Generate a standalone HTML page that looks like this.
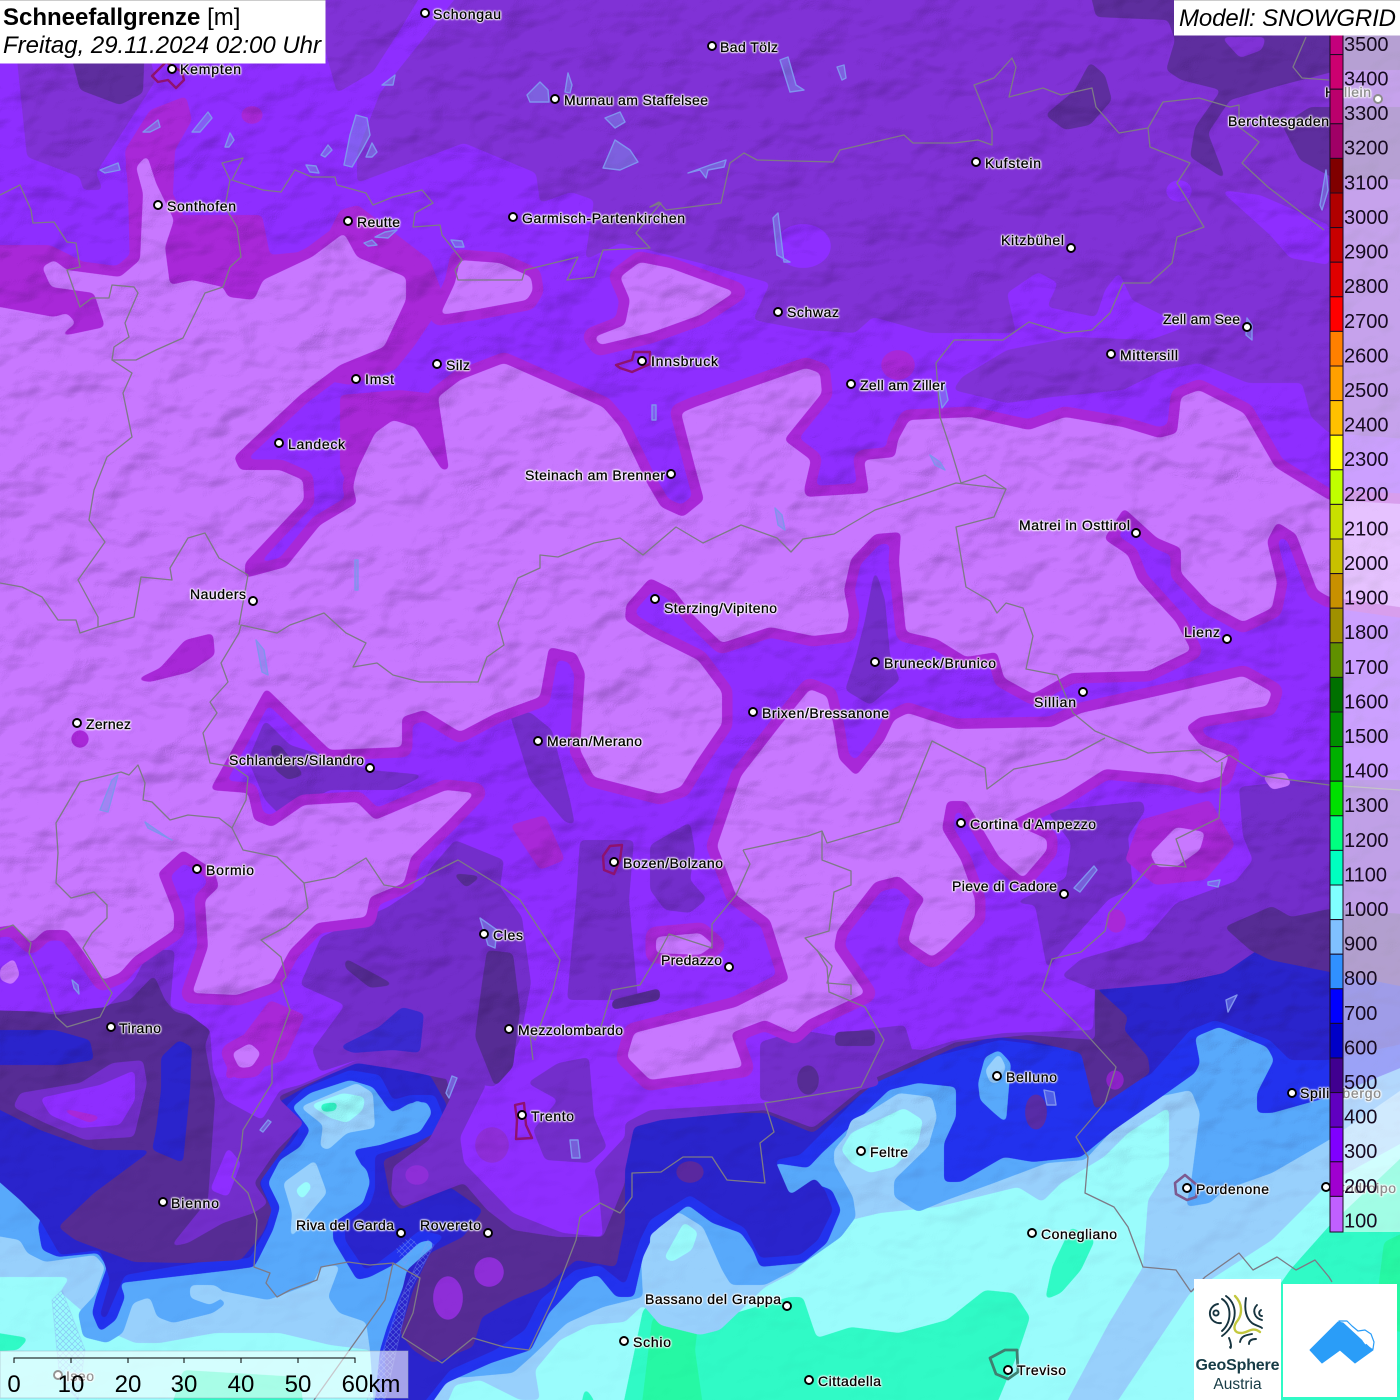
<!DOCTYPE html>
<html><head><meta charset="utf-8"><title>Schneefallgrenze</title>
<style>
html,body{margin:0;padding:0;background:#fff}
#w{position:relative;width:1400px;height:1400px;overflow:hidden;font-family:"Liberation Sans",sans-serif}
svg{position:absolute;left:0;top:0}
.l{filter:drop-shadow(0 0 .7px #fff) drop-shadow(0 0 .7px #fff) drop-shadow(0 0 .7px #fff)}
.l text{font:14px "Liberation Sans",sans-serif;fill:#000;stroke:#000;stroke-width:.3px}
.d circle{fill:#fff;stroke:#000;stroke-width:1.9}
.b path{fill:none;stroke:#7d7a86;stroke-width:1.3;stroke-linejoin:round}
.lk path{fill:#7b8ee8;fill-opacity:.5;stroke:#8093ee;stroke-width:1.4;stroke-linejoin:round}
.lg text{font:20px "Liberation Sans",sans-serif;fill:#160a20}
.sc text{font:24px "Liberation Sans",sans-serif;fill:#000;text-anchor:middle}
</style></head><body><div id="w">
<svg width="1400" height="1400" viewBox="0 0 1400 1400" xmlns="http://www.w3.org/2000/svg">
<defs>
<filter id="s" filterUnits="userSpaceOnUse" x="-40" y="-40" width="1480" height="1480" color-interpolation-filters="sRGB"><feGaussianBlur stdDeviation="2.6"/><feComponentTransfer><feFuncA type="linear" slope="10" intercept="-4.5"/></feComponentTransfer></filter>
<filter id="hs" filterUnits="userSpaceOnUse" x="0" y="0" width="1400" height="1400" color-interpolation-filters="sRGB"><feTurbulence type="fractalNoise" baseFrequency="0.018 0.026" numOctaves="3" seed="7"/><feColorMatrix type="matrix" values="0 0 0 0 0 0 0 0 0 0 0 0 0 0 0 1 0 0 0 0"/><feDiffuseLighting surfaceScale="9" diffuseConstant="1.27" lighting-color="#fff"><feDistantLight azimuth="225" elevation="52"/></feDiffuseLighting><feColorMatrix type="matrix" values="0 0 0 0 .12 0 0 0 0 .03 0 0 0 0 .25 -.34 0 0 0 .34"/></filter>
<linearGradient id="hg" x1="0" y1="0" x2="0" y2="1"><stop offset="0" stop-color="#fff"/><stop offset=".72" stop-color="#fff"/><stop offset=".86" stop-color="#444"/><stop offset="1" stop-color="#111"/></linearGradient>
<mask id="hm" maskUnits="userSpaceOnUse" x="0" y="0" width="1400" height="1400"><rect width="1400" height="1400" fill="url(#hg)"/></mask>
<pattern id="hatch" width="6" height="6" patternUnits="userSpaceOnUse"><path d="M0 0L6 6M6 0L0 6" stroke="#7d9cf0" stroke-width=".7"/></pattern>
<path id="L1" d="M-20,305 L0,307 54,317 67,313 76,323 58,337 105,327 94,293 51,287 42,267 54,260 67,270 120,277 140,260 143,193 136,167 147,155 156,183 174,220 165,247 170,285 192,280 223,287 228,297 254,300 263,280 312,257 344,233 357,257 406,277 406,300 384,347 340,365 300,395 234,457 240,470 280,470 303,480 304,500 245,563 245,578 286,567 320,525 357,503 353,487 357,470 375,433 393,420 415,427 442,470 449,470 438,397 460,380 504,363 603,407 620,427 647,483 661,507 683,517 704,500 695,467 681,413 695,407 806,368 820,373 822,393 784,440 811,460 804,490 806,497 869,493 864,460 895,457 898,440 909,420 971,417 1029,430 1065,417 1123,427 1159,438 1177,433 1181,397 1199,390 1244,413 1275,467 1329,500 1420,505 1420,610 1329,597 1317,590 1296,534 1277,522 1267,541 1277,583 1272,608 1243,622 1210,604 1181,573 1181,548 1157,538 1124,508 1104,539 1128,555 1138,580 1176,622 1191,650 1148,671 1071,673 1033,694 1004,678 997,652 966,657 937,639 906,632 899,562 901,532 875,534 851,559 844,590 849,615 846,632 813,636 770,627 722,643 693,615 674,590 650,578 626,605 625,620 650,636 698,660 722,692 722,724 698,759 681,787 660,794 594,777 580,750 585,673 576,653 549,647 540,697 496,713 460,732 424,710 402,717 402,747 330,750 266,688 210,790 248,793 254,820 272,827 304,805 357,802 375,820 446,790 475,793 446,823 411,857 404,883 370,897 366,917 317,923 290,950 272,983 237,995 192,993 208,947 205,900 219,887 214,870 183,850 158,873 174,913 174,930 134,957 120,973 103,980 80,947 67,930 45,930 31,943 13,925 -20,930Z"/>
<path id="L2" d="M779,727 810,689 827,696 834,727 839,759 856,776 884,741 894,720 908,713 956,729 1052,727 1081,713 1157,696 1243,676 1272,692 1267,706 1200,717 1186,727 1200,745 1229,755 1222,776 1200,783 1172,775 1105,769 1061,797 1009,822 1047,839 1047,850 1023,878 999,857 966,801 947,801 942,829 961,860 975,899 975,917 944,948 932,957 908,941 916,913 925,899 899,876 875,882 837,931 834,948 865,993 808,1020 794,1033 765,1020 731,1033 743,1067 650,1080 627,1057 634,1033 736,1007 789,980 770,920 736,895 717,846 741,776Z"/>
<path id="L3" d="M460,260 500,263 531,277 533,290 527,300 473,310 440,315 455,283Z"/>
<path id="L4" d="M620,277 640,262 670,268 735,292 700,315 650,333 600,345 594,337 625,325 630,300Z"/>
<path id="L5" d="M1150,854 1176,827 1205,832 1200,850 1176,867 1157,867Z"/>
<path id="L6" d="M656,937 700,933 714,945 700,955 656,953Z"/>
<path id="L7" d="M232,1053 250,1043 261,1053 252,1067 239,1068Z"/>
</defs>

<!-- base -->
<rect width="1400" height="1400" fill="#9afcfc"/>
<g fill="#30fac6" filter="url(#s)">
<path d="M620,1420 643,1310 660,1295 700,1300 712,1320 789,1297 803,1297 813,1327 817,1338 851,1327 899,1333 947,1320 985,1290 1014,1293 1030,1317 1018,1353 990,1420Z"/>
<path d="M1185,1420 1290,1270 1330,1225 1420,1140 1420,1420Z"/>
<path d="M1071,1227 1095,1240 1081,1270 1061,1293 1045,1300 1052,1267Z"/>
<path d="M-20,1330 29,1338 18,1350 -20,1352Z"/>
<path d="M167,1420 183,1370 300,1377 305,1420Z"/>
<path d="M578,1420 585,1387 594,1400 596,1420Z"/>
</g>
<g fill="#26f8a4" filter="url(#s)">
<path d="M640,1420 652,1320 665,1308 700,1308 695,1350 705,1420Z"/>
<path d="M1384,1242 1420,1225 1420,1335 1390,1330 1378,1290Z"/>
</g>

<!-- 900 -->
<g fill="#98d0fc" filter="url(#s)"><path d="M-20,1277 70,1277 60,1292 75,1305 105,1330 135,1343 160,1343 215,1333 280,1333 330,1345 370,1350 395,1420 440,1420 455,1385 480,1380 520,1400 540,1400 535,1370 560,1340 590,1325 625,1322 643,1305 660,1325 700,1335 720,1330 765,1287 793,1273 851,1220 880,1213 937,1207 1018,1187 1042,1202 1061,1183 1104,1157 1128,1133 1169,1107 1169,1167 1148,1200 1143,1267 1109,1323 1057,1420 1105,1420 1190,1293 1272,1240 1329,1183 1420,1133 1420,-20 -20,-20Z"/></g>
<!-- 800 -->
<g fill="#58a9fb" filter="url(#s)"><path d="M-20,1233 20,1240 27,1253 45,1262 95,1255 105,1267 95,1295 78,1313 83,1337 107,1343 123,1333 133,1303 150,1297 157,1317 173,1323 213,1313 227,1303 195,1285 232,1293 268,1300 313,1283 321,1267 340,1265 328,1297 339,1313 366,1322 370,1350 375,1420 420,1420 447,1378 469,1377 513,1373 531,1357 567,1323 603,1307 643,1297 640,1240 650,1227 679,1212 703,1227 722,1270 731,1285 765,1285 794,1270 841,1237 856,1217 853,1197 834,1163 834,1150 861,1117 899,1093 932,1097 937,1117 928,1147 894,1180 894,1197 918,1212 947,1200 994,1183 1047,1163 1085,1160 1119,1123 1157,1097 1191,1090 1200,1113 1191,1183 1186,1207 1210,1203 1224,1190 1272,1173 1329,1140 1420,1077 1420,-20 -20,-20Z"/></g>
<!-- 700 -->
<g fill="#2232ee" filter="url(#s)"><path d="M-20,1180 15,1183 45,1203 38,1227 42,1250 58,1257 98,1253 107,1267 96,1297 92,1313 100,1332 116,1320 125,1297 120,1283 232,1270 254,1267 258,1260 273,1230 280,1207 268,1183 280,1160 300,1147 310,1130 300,1117 292,1107 310,1093 350,1080 373,1087 387,1107 393,1113 410,1103 427,1102 432,1113 420,1132 380,1145 353,1148 353,1157 367,1170 370,1183 363,1203 333,1223 333,1240 357,1280 370,1277 397,1263 420,1242 432,1240 433,1247 407,1277 387,1327 380,1350 373,1420 420,1420 446,1383 491,1363 531,1350 549,1313 580,1280 598,1275 616,1297 634,1297 643,1257 656,1230 688,1205 712,1223 741,1233 753,1250 760,1267 803,1263 827,1243 841,1210 832,1190 813,1183 789,1203 774,1163 808,1168 822,1153 861,1117 889,1090 918,1083 956,1087 956,1117 944,1143 944,1182 961,1182 1004,1157 1033,1162 1081,1157 1114,1130 1157,1100 1195,1073 1200,1063 1195,1037 1219,1027 1267,1047 1274,1060 1257,1093 1257,1113 1272,1113 1329,1097 1420,1060 1420,-20 -20,-20Z"/></g>
<!-- islands in blue -->
<g fill="#58a9fb" filter="url(#s)"><path d="M978,1083 985,1057 999,1050 1011,1063 1006,1123 994,1113 980,1100Z"/></g>
<g fill="#98d0fc" filter="url(#s)"><path d="M985,1070 999,1053 1006,1067 999,1083 990,1083Z"/></g>
<!-- 600 -->
<g fill="#2a24cc" filter="url(#s)"><path d="M-20,1165 20,1200 40,1220 60,1255 100,1250 110,1280 100,1315 105,1320 118,1290 125,1275 200,1262 250,1258 268,1225 270,1205 260,1183 272,1160 290,1145 300,1130 285,1107 305,1088 350,1070 380,1075 393,1100 410,1095 435,1095 443,1115 430,1140 375,1155 375,1190 370,1205 345,1225 345,1240 365,1270 375,1265 395,1250 420,1230 445,1236 407,1270 395,1320 385,1345 385,1420 410,1420 450,1370 495,1350 525,1330 540,1300 575,1270 600,1265 625,1285 640,1240 650,1220 690,1195 720,1215 745,1228 760,1258 800,1255 818,1240 833,1210 825,1190 815,1178 790,1195 775,1160 800,1155 860,1095 880,1070 1000,1040 1080,1050 1100,1095 1150,1075 1190,1030 1215,1020 1270,1040 1290,1060 1329,1060 1420,1040 1420,-20 -20,-20Z"/></g>
<!-- 500 -->
<g fill="#562c94" filter="url(#s)"><path d="M-20,1100 40,1130 95,1150 152,1150 94,1193 58,1227 75,1240 134,1262 188,1263 241,1260 263,1233 272,1210 259,1183 290,1140 295,1130 277,1103 300,1090 357,1060 430,1075 447,1105 440,1130 395,1155 383,1160 390,1197 400,1210 450,1187 483,1210 463,1237 430,1253 413,1290 400,1333 413,1350 433,1363 473,1347 482,1317 513,1300 545,1287 576,1260 616,1267 625,1223 625,1133 661,1113 765,1113 813,1133 875,1083 956,1047 994,1037 1028,1040 1081,1053 1095,1110 1150,1073 1148,1057 1124,1030 1128,1017 1095,987 1176,983 1224,973 1243,960 1272,940 1340,930 1420,930 1420,-20 -20,-20Z"/></g>
<!-- 600 patches in 500 -->
<g fill="#2a24cc" filter="url(#s)">
<path d="M-20,1030 55,1030 90,1040 94,1060 60,1065 -20,1065Z"/>
<path d="M161,1057 179,1040 192,1047 190,1090 183,1163 152,1150 156,1130 161,1090Z"/>
<path d="M1150,1045 1190,1005 1240,985 1272,950 1300,985 1329,993 1329,1060 1290,1060 1270,1040 1215,1020 1190,1030 1150,1075Z"/>
</g>
<!-- 400 -->
<g fill="#732ecb" filter="url(#s)"><path d="M-20,1005 60,1015 130,1000 154,975 165,1000 175,1012 214,1020 205,1045 215,1100 208,1200 170,1247 188,1243 223,1223 254,1213 268,1203 254,1183 277,1150 304,1123 277,1097 357,1063 446,1077 451,1097 429,1140 393,1167 391,1193 402,1207 464,1183 487,1210 513,1230 558,1237 603,1237 625,1183 625,1170 634,1127 661,1120 765,1110 813,1128 875,1078 956,1042 1028,1035 1095,1040 1095,985 1176,980 1224,970 1243,958 1272,938 1340,928 1420,928 1420,-20 -20,-20Z"/></g>
<g fill="#732ecb" filter="url(#s)"><path d="M20,1093 80,1083 112,1063 143,1060 147,1083 134,1137 85,1140 45,1123 13,1107Z"/></g>
<!-- 300 -->
<g fill="#8e2eff" filter="url(#s)"><path d="M-20,1010 58,1012 107,1007 134,980 150,950 175,950 170,1007 187,1013 210,1030 213,1070 225,1100 262,1120 280,1090 300,1085 357,1060 450,1078 487,1083 460,1137 464,1163 513,1213 563,1233 603,1237 598,1183 594,1170 625,1137 625,1123 650,1110 765,1103 803,1090 860,1077 884,1047 923,1050 956,1040 1004,1033 1093,1030 1095,990 1087,960 1200,930 1236,881 1253,860 1243,836 1239,787 1300,780 1420,780 1420,-20 -20,-20Z"/>
<path d="M40,1098 100,1085 135,1070 135,1100 120,1125 80,1128 50,1115Z"/><path d="M210,1190 228,1147 241,1163 228,1197Z"/></g>
<!-- central / eastern 400 patches -->
<g fill="#732ecb" filter="url(#s)">
<path d="M321,937 388,907 424,883 429,870 455,840 504,860 500,887 522,917 531,983 520,1040 495,1087 450,1080 357,1060 320,1072 312,1050 345,1005 300,985Z"/>
<path d="M527,1083 558,1063 589,1057 594,1117 607,1147 589,1163 545,1160 533,1130 558,1100Z"/>
<path d="M580,840 634,840 629,900 638,1000 567,1000 576,900Z"/>
<path d="M650,845 690,822 695,850 690,880 707,899 690,913 665,910 650,890Z"/>
<path d="M1047,811 1143,801 1145,811 1128,836 1133,889 1109,899 1071,941 1047,969 1035,905 1014,903 1066,878 1071,843Z"/>
<path d="M1239,787 1243,836 1253,860 1236,881 1176,903 1143,941 1081,959 1061,976 1095,990 1176,983 1224,973 1243,960 1272,940 1340,928 1420,928 1420,790Z"/>
<path d="M860,1030 905,1025 915,1060 870,1075 840,1080 820,1050Z"/>
<path d="M760,1042 800,1030 860,1040 880,1085 800,1105 760,1100Z"/>
<path d="M510,715 530,712 552,730 570,800 575,825 565,822 530,780Z"/>
<path d="M265,720 290,745 370,770 425,775 395,790 330,790 280,815 265,800 248,760Z"/>
<path d="M875,568 885,600 890,655 900,680 870,705 845,690 855,660 865,620Z"/>
</g>
<!-- 500 patches -->
<g fill="#562c94" filter="url(#s)">
<path d="M487,950 513,953 520,1010 513,1067 495,1087 475,1037 482,983Z"/>
<path d="M345,958 395,985 370,988 345,968Z"/>
<path d="M452,873 482,876 466,888Z"/>
<path d="M612,1000 660,988 660,1000 612,1010Z"/>
<path d="M835,1032 875,1030 875,1046 835,1046Z"/>
<ellipse cx="808" cy="1080" rx="11" ry="15"/>
<path d="M270,745 280,745 304,775 288,780 275,770Z"/>
<path d="M1224,927 1272,906 1291,917 1329,909 1420,915 1420,990 1270,960 1250,950Z"/>
</g>
<!-- blue patch central-west -->
<g fill="#3a2ad0" filter="url(#s)"><path d="M339,1047 379,1027 402,1007 424,1013 420,1053 393,1050 353,1053Z"/></g>
<!-- north 400 -->
<g fill="#8032d6" filter="url(#s)">
<path d="M470,-20 380,93 357,153 357,183 464,143 536,173 540,203 571,192 594,200 585,260 620,243 700,263 770,283 753,320 806,330 855,333 873,317 930,333 1016,333 1007,293 1038,272 1058,283 1047,307 1096,317 1105,290 1119,272 1132,300 1186,327 1150,340 1074,337 1007,350 962,377 953,390 1007,403 1052,397 1123,390 1163,370 1199,363 1248,383 1302,383 1311,417 1329,433 1420,440 1420,-20Z"/>
<path d="M325,-20 325,50 337,93 373,72 400,30 430,-20Z"/>
<path d="M15,40 27,157 80,177 83,190 103,190 96,173 156,80 145,40Z"/>
</g>
<g fill="#8e2eff" filter="url(#s)">
<ellipse cx="803" cy="246" rx="28" ry="22"/>
<path d="M1220,190 1260,195 1329,225 1329,265 1290,258 1270,235Z"/>
<ellipse cx="1179" cy="191" rx="13" ry="11"/>
</g>
<g fill="#5e2e9e" filter="url(#s)">
<path d="M1087,-20 1096,17 1168,20 1175,40 1166,70 1181,80 1221,90 1195,127 1190,157 1226,180 1208,133 1230,100 1282,85 1340,70 1420,70 1420,-20Z"/>
<path d="M1045,115 1075,90 1090,62 1105,75 1112,100 1090,125 1065,130Z"/>
<path d="M1282,125 1310,107 1420,107 1420,180 1333,178 1300,160Z"/>
<path d="M67,40 80,90 120,105 143,93 145,40Z"/>
</g>
<g fill="#8032d6" filter="url(#s)"><path d="M1221,37 1266,37 1262,50 1240,58Z"/></g>
<!-- 200 -->
<g fill="#a828d8" filter="url(#s)" stroke="#a828d8" stroke-width="21" stroke-linejoin="round">
<use href="#L1"/><use href="#L2"/><use href="#L3"/><use href="#L4"/><use href="#L5"/><use href="#L6"/><use href="#L7"/>
</g>
<g fill="#a828d8" filter="url(#s)">
<path d="M-20,245 50,245 100,270 130,270 128,190 125,150 150,110 186,96 192,120 175,150 172,215 262,215 270,255 320,250 340,210 358,205 430,260 445,300 415,345 395,370 350,385 100,340 -20,340Z"/>
<path d="M340,395 400,390 445,395 452,470 435,470 395,440 370,450 357,500 340,470Z"/>
<path d="M230,1053 270,1000 305,1015 285,1060 225,1080Z"/>
<path d="M58,1107 103,1117 90,1123 70,1115Z"/>
<path d="M1140,820 1210,800 1235,845 1205,880 1155,885 1125,860Z"/>
<path d="M510,825 545,815 565,860 540,870Z"/>
<ellipse cx="252" cy="115" rx="11" ry="9"/>
<ellipse cx="898" cy="365" rx="17" ry="15"/>
<ellipse cx="1116" cy="921" rx="10" ry="12"/>
<ellipse cx="1115" cy="1080" rx="9" ry="10" fill="#8c22c8"/>
</g>
<g fill="#8e2ed8" filter="url(#s)">
<ellipse cx="448" cy="1298" rx="15" ry="22"/><ellipse cx="489" cy="1272" rx="15" ry="15"/><ellipse cx="417" cy="1175" rx="12" ry="10"/>
<ellipse cx="492" cy="1145" rx="17" ry="18"/>
</g>
<!-- 100 -->
<g fill="#c878ff" filter="url(#s)">
<use href="#L1"/><use href="#L2"/><use href="#L3"/><use href="#L4"/><use href="#L5"/><use href="#L6"/><use href="#L7"/>
<path d="M0,968 14,958 20,975 12,985 0,980Z"/>
<path d="M1262,776 1285,772 1292,785 1272,790Z"/>
</g>
<!-- spots in light -->
<g fill="#a828d8" filter="url(#s)"><path d="M135,680 160,668 185,640 213,633 215,655 190,672 150,682Z"/><circle cx="80" cy="739" r="9"/></g>
<!-- Riva & other high islands -->
<g fill="#58a9fb" filter="url(#s)"><path d="M293,1107 353,1082 367,1085 383,1100 387,1113 407,1107 417,1100 432,1108 420,1130 380,1145 353,1150 370,1180 363,1203 333,1223 332,1240 292,1250 283,1210 286,1170 310,1150 312,1130Z"/></g>
<g fill="#98d0fc" filter="url(#s)">
<path d="M300,1107 357,1083 373,1093 375,1128 347,1133 328,1150 320,1147 323,1125Z"/>
<path d="M283,1183 315,1160 327,1193 310,1213 290,1240 292,1213Z"/>
<path d="M650,1235 680,1212 705,1240 722,1285 700,1310 650,1300Z"/>
<path d="M841,1150 851,1120 900,1098 930,1105 930,1145 890,1180 860,1200 850,1175Z"/>
<path d="M190,1285 215,1285 228,1295 210,1305 190,1298Z"/>
</g>
<g fill="#9afcfc" filter="url(#s)">
<path d="M310,1105 343,1093 365,1097 363,1110 347,1123 330,1118Z"/>
<path d="M295,1190 307,1180 312,1187 302,1200Z"/>
<path d="M664,1258 684,1222 698,1232 692,1250 672,1262Z"/>
<path d="M841,1150 851,1133 904,1108 923,1120 918,1143 894,1167 870,1173 851,1163Z"/>
</g>
<g fill="#30fac6" filter="url(#s)"><path d="M320,1104 338,1102 336,1111 322,1112Z"/></g>
<g fill="#6a2a90" opacity=".75" filter="url(#s)"><ellipse cx="690" cy="1172" rx="14" ry="11"/><ellipse cx="1036" cy="1112" rx="11" ry="18"/></g>

<!-- hillshade -->
<g mask="url(#hm)"><rect width="1400" height="1400" filter="url(#hs)"/></g>

<!-- lakes -->
<g class="lk">
<path d="M344,165 350,135 356,115 367,118 370,135 362,150 352,167Z"/>
<path d="M382,85 395,75 393,85Z"/><path d="M143,132 158,120 160,127 150,132Z"/><path d="M192,132 208,112 212,118 200,132Z"/>
<path d="M100,170 118,163 120,170 105,173Z"/><path d="M225,147 230,133 234,140 229,147Z"/><path d="M321,155 328,145 332,150 325,157Z"/>
<path d="M366,157 372,143 377,152 372,157Z"/><path d="M306,165 316,166 319,173 310,172Z"/><path d="M375,237 385,232 397,230 388,238Z"/>
<path d="M364,243 372,240 377,245 368,246Z"/><path d="M451,240 462,241 464,247 455,247Z"/>
<path d="M527,95 540,82 548,90 549,102 530,102Z"/><path d="M565,92 568,73 572,85 570,93Z"/>
<path d="M605,118 620,112 625,122 615,128Z"/><path d="M603,168 615,140 630,150 638,162 620,170Z"/>
<path d="M780,60 788,57 796,85 804,90 790,92Z"/><path d="M837,67 844,65 846,78 842,80Z"/>
<path d="M688,173 710,165 726,160 724,167 708,170 706,178 700,170Z"/><path d="M773,218 778,213 784,262 790,262 777,255Z"/>
<path d="M1226,1000 1237,995 1228,1012Z"/><path d="M1074,888 1094,866 1097,870 1080,892Z"/>
<path d="M1208,882 1220,880 1218,887 1208,885Z"/><path d="M480,918 497,930 495,948 488,945Z"/>
<path d="M446,1093 452,1076 457,1078 449,1098Z"/><path d="M570,1140 578,1140 580,1158 572,1158Z"/>
<path d="M260,1130 268,1120 271,1122 263,1132Z"/><path d="M72,980 78,985 79,994 74,988Z"/>
<path d="M256,640 264,650 268,675 262,672Z"/><path d="M100,810 112,780 118,775 108,812Z"/>
<path d="M145,822 168,838 172,840 148,828Z"/><path d="M1044,1090 1054,1092 1056,1105 1047,1105Z"/>
<path d="M355,560 358,560 358,590 355,590Z"/><path d="M930,455 940,462 945,470 935,465Z"/>
<path d="M775,508 782,515 785,530 778,525Z"/><path d="M652,405 656,405 656,420 652,420Z"/>
<path d="M1247,318 1252,325 1252,340 1246,335Z"/><path d="M938,385 945,385 948,400 942,408Z"/>
<path d="M1320,205 1326,170 1328,190 1322,210Z"/>
</g>
<g opacity=".55">
<path d="M52,1300 62,1290 85,1350 78,1400 60,1380Z" fill="url(#hatch)" stroke="#8ea0f0" stroke-width="1" stroke-opacity=".5"/>
<path d="M367,1400 400,1300 428,1240 434,1245 410,1290 385,1400Z" fill="url(#hatch)" stroke="#8ea0f0" stroke-width="1" stroke-opacity=".5"/>
<path d="M395,1250 408,1237 418,1243 405,1265Z" fill="url(#hatch)"/>
</g>

<!-- borders -->
<g class="b">
<path d="M0,195 20,185 31,210 33,223 54,222 67,242 76,243 80,267 67,270 80,307 92,298 109,298 112,285 134,287 138,293 125,323 129,337 114,347 112,360 136,360 156,350 183,338 205,293 223,287 230,267 241,257 237,227 225,207 230,180 222,163 243,158 232,180 263,190 281,192 295,170 312,177 335,177 337,185 366,193 373,205 393,197 422,190 433,203 415,213 413,227 440,225 442,235 462,260 455,270 458,280 522,280 525,270 578,257 567,280 594,277 603,250 650,248 636,233 661,203 650,207 659,202 666,210 721,203 730,163 744,153 757,160 833,162 840,150 904,135 913,143 954,143 978,140 992,145 992,130 974,85 994,78 1012,58 1016,67 1009,97 1043,88 1061,95 1092,88 1096,107 1119,133 1148,128 1163,102 1199,98 1230,107 1239,105 1239,127 1259,142 1242,163 1268,187 1324,230"/>
<path d="M1306,37 1293,67 1302,78 1329,80"/>
<path d="M1148,128 1150,147 1190,163 1177,183 1204,227 1177,237 1172,263 1150,283 1123,283 1110,313 1092,330 1065,333 1029,322 1003,340 954,340 936,363 940,417 951,450 961,483 985,475 1006,489 994,517 956,527 966,587 990,601 997,613 1006,603 1023,608 1033,636 1026,669 1057,675 1073,713 1095,731 1148,753 1200,750 1217,762 1229,755 1262,776 1329,785 1400,790"/>
<path d="M1006,489 956,483 918,496 875,510 834,534 803,539 791,552 777,538 741,525 703,543 676,527 643,555 620,538 594,543 558,557 540,555 540,568 518,578 498,623 504,645 487,657 478,682 420,682 393,675 377,663 353,667 366,643 346,633 324,613 290,625 277,633 241,625 239,633 221,663 228,682 210,702 217,713 203,733 210,763 234,767 248,777 246,800 232,828 219,818 188,815 170,820 152,802 143,800 145,783 138,765 129,775 121,772 80,782 56,823 58,853 56,883 71,898 94,892 107,905 107,918 92,933 83,948 103,980 112,993 100,1017 67,1027 56,1017 45,987 29,953 31,943 13,925 0,930"/>
<path d="M112,360 132,373 123,393 132,437 107,457 94,490 89,520 105,542 78,580 98,617 98,627"/>
<path d="M248,575 219,558 205,533 188,538 170,568 172,580 141,577 134,617 98,627 80,633 76,620 58,620 42,597 22,587 0,583"/>
<path d="M248,575 239,625"/>
<path d="M232,828 243,850 277,857 304,883 335,877 366,858 384,885 402,888 458,860 502,887 520,900 560,960 553,990 535,1040 530,1035 533,1060"/>
<path d="M304,883 308,908 286,927 261,940 281,957 286,977 281,983 290,1010 272,1060 272,1083 243,1130 241,1150 232,1177 248,1193 257,1220 254,1267 270,1273 266,1283 277,1297 290,1290 317,1280 321,1267 348,1262 370,1265 393,1263 420,1278 413,1313 402,1337 442,1363 473,1338 504,1347 529,1350 554,1297 576,1240 580,1217 600,1203 620,1213 632,1197 632,1173 661,1172 683,1157 712,1157 727,1180 765,1183 760,1143 774,1132 765,1103 803,1097 861,1087 884,1040 865,1007 829,992 827,967 817,950"/>
<path d="M743,850 808,836 822,831 827,843 899,822 932,741 985,768 987,789 1014,769 1066,759 1105,738"/>
<path d="M743,850 750,864 736,895 712,924 712,948 669,934 655,960 640,985 612,990 600,1030"/>
<path d="M822,831 822,860 851,871 851,885 834,892 829,931 805,938 832,966 827,983 851,985 851,995"/>
<path d="M1222,762 1219,818 1176,839 1186,867 1152,864 1109,913 1105,931 1081,952 1052,959 1042,990 1076,1023 1116,1067 1105,1103 1076,1137 1088,1157 1085,1193 1114,1207 1128,1227 1143,1267 1176,1270 1191,1292"/>
<path d="M1191,1292 1205,1277 1239,1253 1253,1270 1277,1257 1296,1270 1315,1260 1329,1277 1332,1282"/>
<path d="M314,1400 385,1300 393,1263" stroke-width="1"/>
</g>

<!-- city outlines -->
<g fill="none" stroke-linejoin="round">
<path d="M152,76 162,66 166,62 182,72 184,80 176,88 168,80 158,82Z" stroke="#8e1270" stroke-width="2.4"/>
<path d="M616,365 632,360 634,352 650,352 650,364 632,372 620,368Z" stroke="#8e1270" stroke-width="2.4"/>
<path d="M603,856 610,846 622,845 620,860 614,874 604,870Z" stroke="#8e1270" stroke-width="2.4"/>
<path d="M515,1105 524,1103 526,1125 532,1138 516,1139 517,1120Z" stroke="#8e1270" stroke-width="2.4"/>
<path d="M1175,1183 1185,1175 1198,1186 1196,1197 1187,1200 1176,1194Z" stroke="#7c5a90" stroke-width="2.6"/>
<path d="M990,1358 1005,1350 1017,1350 1018,1372 1008,1379 996,1374Z" stroke="#3f7f70" stroke-width="2.8"/>
</g>

<!-- city dots -->
<g class="d">
<circle cx="425" cy="13" r="4"/><circle cx="712" cy="46" r="4"/><circle cx="172" cy="69" r="4"/><circle cx="555" cy="99" r="4"/><circle cx="976" cy="162" r="4"/><circle cx="158" cy="205" r="4"/><circle cx="348" cy="221" r="4"/><circle cx="513" cy="217" r="4"/><circle cx="1071" cy="248" r="4"/><circle cx="778" cy="312" r="4"/><circle cx="1247" cy="327" r="4"/><circle cx="1111" cy="354" r="4"/><circle cx="642" cy="361" r="4"/><circle cx="437" cy="364" r="4"/><circle cx="356" cy="379" r="4"/><circle cx="851" cy="384" r="4"/><circle cx="279" cy="443" r="4"/><circle cx="671" cy="474" r="4"/><circle cx="1136" cy="533" r="4"/><circle cx="253" cy="601" r="4"/><circle cx="655" cy="599" r="4"/><circle cx="1227" cy="639" r="4"/><circle cx="875" cy="662" r="4"/><circle cx="1083" cy="692" r="4"/><circle cx="753" cy="712" r="4"/><circle cx="77" cy="723" r="4"/><circle cx="538" cy="741" r="4"/><circle cx="370" cy="768" r="4"/><circle cx="961" cy="823" r="4"/><circle cx="614" cy="862" r="4"/><circle cx="197" cy="869" r="4"/><circle cx="1064" cy="894" r="4"/><circle cx="484" cy="934" r="4"/><circle cx="729" cy="967" r="4"/><circle cx="111" cy="1027" r="4"/><circle cx="509" cy="1029" r="4"/><circle cx="997" cy="1076" r="4"/><circle cx="1292" cy="1093" r="4"/><circle cx="522" cy="1115" r="4"/><circle cx="861" cy="1151" r="4"/><circle cx="1187" cy="1188" r="4"/><circle cx="1326" cy="1187" r="4"/><circle cx="163" cy="1202" r="4"/><circle cx="401" cy="1233" r="4"/><circle cx="488" cy="1233" r="4"/><circle cx="1032" cy="1233" r="4"/><circle cx="787" cy="1306" r="4"/><circle cx="624" cy="1341" r="4"/><circle cx="809" cy="1380" r="4"/><circle cx="1008" cy="1370" r="4"/><circle cx="1378" cy="99" r="4"/><circle cx="58" cy="1375" r="4"/><circle cx="1336" cy="127" r="4"/>
</g>
<!-- city labels -->
<g class="l">
<text x="433" y="19" textLength="68">Schongau</text><text x="720" y="52" textLength="58">Bad Tölz</text><text x="180" y="74" textLength="61">Kempten</text><text x="564" y="105" textLength="144">Murnau am Staffelsee</text>
<text x="1325" y="97" textLength="46">Hallein</text><text x="1228" y="126" textLength="101">Berchtesgaden</text><text x="985" y="168" textLength="56">Kufstein</text><text x="167" y="211" textLength="69">Sonthofen</text><text x="357" y="227" textLength="43">Reutte</text><text x="522" y="223" textLength="163">Garmisch-Partenkirchen</text><text x="1001" y="245" textLength="63">Kitzbühel</text><text x="787" y="317" textLength="52">Schwaz</text><text x="1163" y="324" textLength="77">Zell am See</text><text x="1120" y="360" textLength="58">Mittersill</text><text x="651" y="366" textLength="67">Innsbruck</text><text x="446" y="370" textLength="24">Silz</text><text x="365" y="384" textLength="29">Imst</text><text x="860" y="390" textLength="85">Zell am Ziller</text><text x="288" y="449" textLength="57">Landeck</text><text x="525" y="480" textLength="140">Steinach am Brenner</text><text x="1019" y="530" textLength="111">Matrei in Osttirol</text><text x="190" y="599" textLength="56">Nauders</text><text x="664" y="613" textLength="113">Sterzing/Vipiteno</text><text x="1184" y="637" textLength="36">Lienz</text><text x="884" y="668" textLength="112">Bruneck/Brunico</text><text x="1034" y="707" textLength="42">Sillian</text><text x="762" y="718" textLength="127">Brixen/Bressanone</text><text x="86" y="729" textLength="45">Zernez</text><text x="547" y="746" textLength="95">Meran/Merano</text><text x="229" y="765" textLength="135">Schlanders/Silandro</text><text x="970" y="829" textLength="126">Cortina d'Ampezzo</text><text x="623" y="868" textLength="100">Bozen/Bolzano</text><text x="206" y="875" textLength="48">Bormio</text><text x="952" y="891" textLength="105">Pieve di Cadore</text><text x="493" y="940" textLength="30">Cles</text><text x="661" y="965" textLength="61">Predazzo</text><text x="119" y="1033" textLength="42">Tirano</text><text x="518" y="1035" textLength="105">Mezzolombardo</text><text x="1006" y="1082" textLength="51">Belluno</text><text x="1300" y="1098" textLength="81">Spilimbergo</text><text x="531" y="1121" textLength="43">Trento</text><text x="870" y="1157" textLength="38">Feltre</text><text x="1196" y="1194" textLength="73">Pordenone</text><text x="1335" y="1193" textLength="61">Codroipo</text><text x="171" y="1208" textLength="48">Bienno</text><text x="296" y="1230" textLength="98">Riva del Garda</text><text x="420" y="1230" textLength="61">Rovereto</text><text x="1041" y="1239" textLength="76">Conegliano</text><text x="645" y="1304" textLength="136">Bassano del Grappa</text><text x="633" y="1347" textLength="38">Schio</text><text x="818" y="1386" textLength="63">Cittadella</text><text x="1017" y="1375" textLength="49">Treviso</text><text x="66" y="1381" textLength="28">Iseo</text>
</g>

<!-- legend -->
<rect x="1343" y="20" width="57" height="1212" fill="#fff" fill-opacity=".55"/>
<g stroke="#1a0a22" stroke-width="1">
<rect x="1330" y="20" width="13" height="34.6" fill="#c4007c"/><rect x="1330" y="54.6" width="13" height="34.6" fill="#cc0070"/><rect x="1330" y="89.2" width="13" height="34.6" fill="#bb006c"/><rect x="1330" y="123.8" width="13" height="34.6" fill="#a00066"/><rect x="1330" y="158.4" width="13" height="34.6" fill="#800000"/><rect x="1330" y="193" width="13" height="34.6" fill="#b00000"/><rect x="1330" y="227.6" width="13" height="34.6" fill="#c80000"/><rect x="1330" y="262.2" width="13" height="34.6" fill="#e00000"/><rect x="1330" y="296.8" width="13" height="34.6" fill="#ff0000"/><rect x="1330" y="331.4" width="13" height="34.6" fill="#ff8000"/><rect x="1330" y="366" width="13" height="34.6" fill="#ffa000"/><rect x="1330" y="400.6" width="13" height="34.6" fill="#ffc000"/><rect x="1330" y="435.2" width="13" height="34.6" fill="#ffff00"/><rect x="1330" y="469.8" width="13" height="34.6" fill="#c0ff00"/><rect x="1330" y="504.4" width="13" height="34.6" fill="#c8e000"/><rect x="1330" y="539" width="13" height="34.6" fill="#c8c000"/><rect x="1330" y="573.6" width="13" height="34.6" fill="#c89000"/><rect x="1330" y="608.2" width="13" height="34.6" fill="#a09000"/><rect x="1330" y="642.8" width="13" height="34.6" fill="#609000"/><rect x="1330" y="677.4" width="13" height="34.6" fill="#007000"/><rect x="1330" y="712" width="13" height="34.6" fill="#009000"/><rect x="1330" y="746.6" width="13" height="34.6" fill="#00b000"/><rect x="1330" y="781.2" width="13" height="34.6" fill="#00e000"/><rect x="1330" y="815.8" width="13" height="34.6" fill="#00ff80"/><rect x="1330" y="850.4" width="13" height="34.6" fill="#00ffc0"/><rect x="1330" y="885" width="13" height="34.6" fill="#80ffff"/><rect x="1330" y="919.6" width="13" height="34.6" fill="#80c0ff"/><rect x="1330" y="954.2" width="13" height="34.6" fill="#3090ff"/><rect x="1330" y="988.8" width="13" height="34.6" fill="#0000ff"/><rect x="1330" y="1023.4" width="13" height="34.6" fill="#0000c8"/><rect x="1330" y="1058" width="13" height="34.6" fill="#400090"/><rect x="1330" y="1092.6" width="13" height="34.6" fill="#6000c0"/><rect x="1330" y="1127.2" width="13" height="34.6" fill="#8000ff"/><rect x="1330" y="1161.8" width="13" height="34.6" fill="#a000d0"/><rect x="1330" y="1196.4" width="13" height="35.6" fill="#c060ff"/>
</g>
<g class="lg">
<text x="1344" y="51">3500</text><text x="1344" y="85.5">3400</text><text x="1344" y="120">3300</text><text x="1344" y="154.7">3200</text><text x="1344" y="189.3">3100</text><text x="1344" y="224">3000</text><text x="1344" y="258.5">2900</text><text x="1344" y="293.2">2800</text><text x="1344" y="327.8">2700</text><text x="1344" y="362.4">2600</text><text x="1344" y="397">2500</text><text x="1344" y="431.6">2400</text><text x="1344" y="466.2">2300</text><text x="1344" y="500.8">2200</text><text x="1344" y="535.4">2100</text><text x="1344" y="570">2000</text><text x="1344" y="604.6">1900</text><text x="1344" y="639.2">1800</text><text x="1344" y="673.8">1700</text><text x="1344" y="708.4">1600</text><text x="1344" y="743">1500</text><text x="1344" y="777.6">1400</text><text x="1344" y="812.2">1300</text><text x="1344" y="846.8">1200</text><text x="1344" y="881.4">1100</text><text x="1344" y="916">1000</text><text x="1344" y="950.6">900</text><text x="1344" y="985.2">800</text><text x="1344" y="1019.8">700</text><text x="1344" y="1054.4">600</text><text x="1344" y="1089">500</text><text x="1344" y="1123.6">400</text><text x="1344" y="1158.2">300</text><text x="1344" y="1192.8">200</text><text x="1344" y="1227.4">100</text>
</g>

<!-- title boxes -->
<rect x="0" y="0" width="325.5" height="63.5" fill="#fff"/><rect x="0" y="0" width="325.5" height="1" fill="#ccc"/>
<text x="3" y="25" font-family="Liberation Sans" font-size="24"><tspan font-weight="bold">Schneefallgrenze</tspan> [m]</text>
<text x="3" y="53" font-family="Liberation Sans" font-size="24" font-style="italic" textLength="318">Freitag, 29.11.2024 02:00 Uhr</text>
<rect x="1174" y="0" width="226" height="35.5" fill="#fff"/><rect x="1174" y="0" width="226" height="1" fill="#ccc"/>
<text x="1179" y="26" font-family="Liberation Sans" font-size="24" font-style="italic" textLength="217">Modell: SNOWGRID</text>

<!-- scale bar -->
<rect x="0" y="1351" width="408" height="47" fill="#fff" fill-opacity=".58" stroke="#9ab" stroke-opacity=".5"/>
<path d="M14,1363V1358H355V1363M71,1358V1363M128,1358V1363M184,1358V1363M241,1358V1363M298,1358V1363" fill="none" stroke="#000" stroke-width="1"/>
<g class="sc"><text x="14" y="1392">0</text><text x="71" y="1392">10</text><text x="128" y="1392">20</text><text x="184" y="1392">30</text><text x="241" y="1392">40</text><text x="298" y="1392">50</text><text x="371" y="1392">60km</text></g>

<!-- GeoSphere logo -->
<rect x="1194" y="1279" width="87" height="121" fill="#fff"/>
<g fill="none" stroke="#16343f" stroke-width="1.9" stroke-linecap="round">
<circle cx="1216" cy="1313" r="2.6"/>
<path d="M1218,1304 A9,9 0 1 0 1221,1323"/>
<path d="M1222,1299 C1232,1305 1232,1322 1222,1331"/>
<path d="M1226,1296 C1240,1306 1236,1326 1222,1336"/>
<path d="M1229,1338 C1232,1345 1231,1350 1230,1347"/>
<path d="M1246,1298 C1244,1310 1246,1318 1252,1323 C1256,1326 1260,1326 1262,1328"/>
<path d="M1257,1305 C1252,1310 1254,1318 1262,1320"/>
<path d="M1261,1310 C1258,1312 1259,1316 1262,1316"/>
<path d="M1240,1342 C1241,1336 1246,1335 1252,1334"/>
<path d="M1249,1344 C1249,1340 1252,1339 1256,1339"/>
</g>
<path d="M1235,1296 C1243,1304 1242,1314 1238,1320 C1232,1327 1234,1333 1241,1333 C1248,1333 1252,1326 1260,1332" fill="none" stroke="#c3c83e" stroke-width="2.4" stroke-linecap="round"/>
<text x="1237.5" y="1370" font-family="Liberation Sans" font-size="16" font-weight="bold" fill="#163b45" text-anchor="middle" textLength="84">GeoSphere</text>
<text x="1237.5" y="1389" font-family="Liberation Sans" font-size="15.5" fill="#163b45" text-anchor="middle">Austria</text>

<!-- Snow logo -->
<rect x="1283" y="1284" width="114" height="113" fill="#fff"/>
<path d="M1339,1321 1347,1321 1352,1326 1358,1331 1365,1330 1371,1334 1374,1342 1373,1349 1362,1352Z" fill="#fff" stroke="#2a9df8" stroke-width="1.2" stroke-linejoin="round"/>
<path d="M1310,1350 1338,1322 1343,1323 1369,1347 1373,1350 1355,1363 1340,1350 1322,1363Z" fill="#2a9df8" stroke="#2a9df8" stroke-width="1" stroke-linejoin="round"/>
<path d="M1363,1340 1366,1344" stroke="#fff" stroke-width="1.6"/>
</svg>
</div></body></html>
